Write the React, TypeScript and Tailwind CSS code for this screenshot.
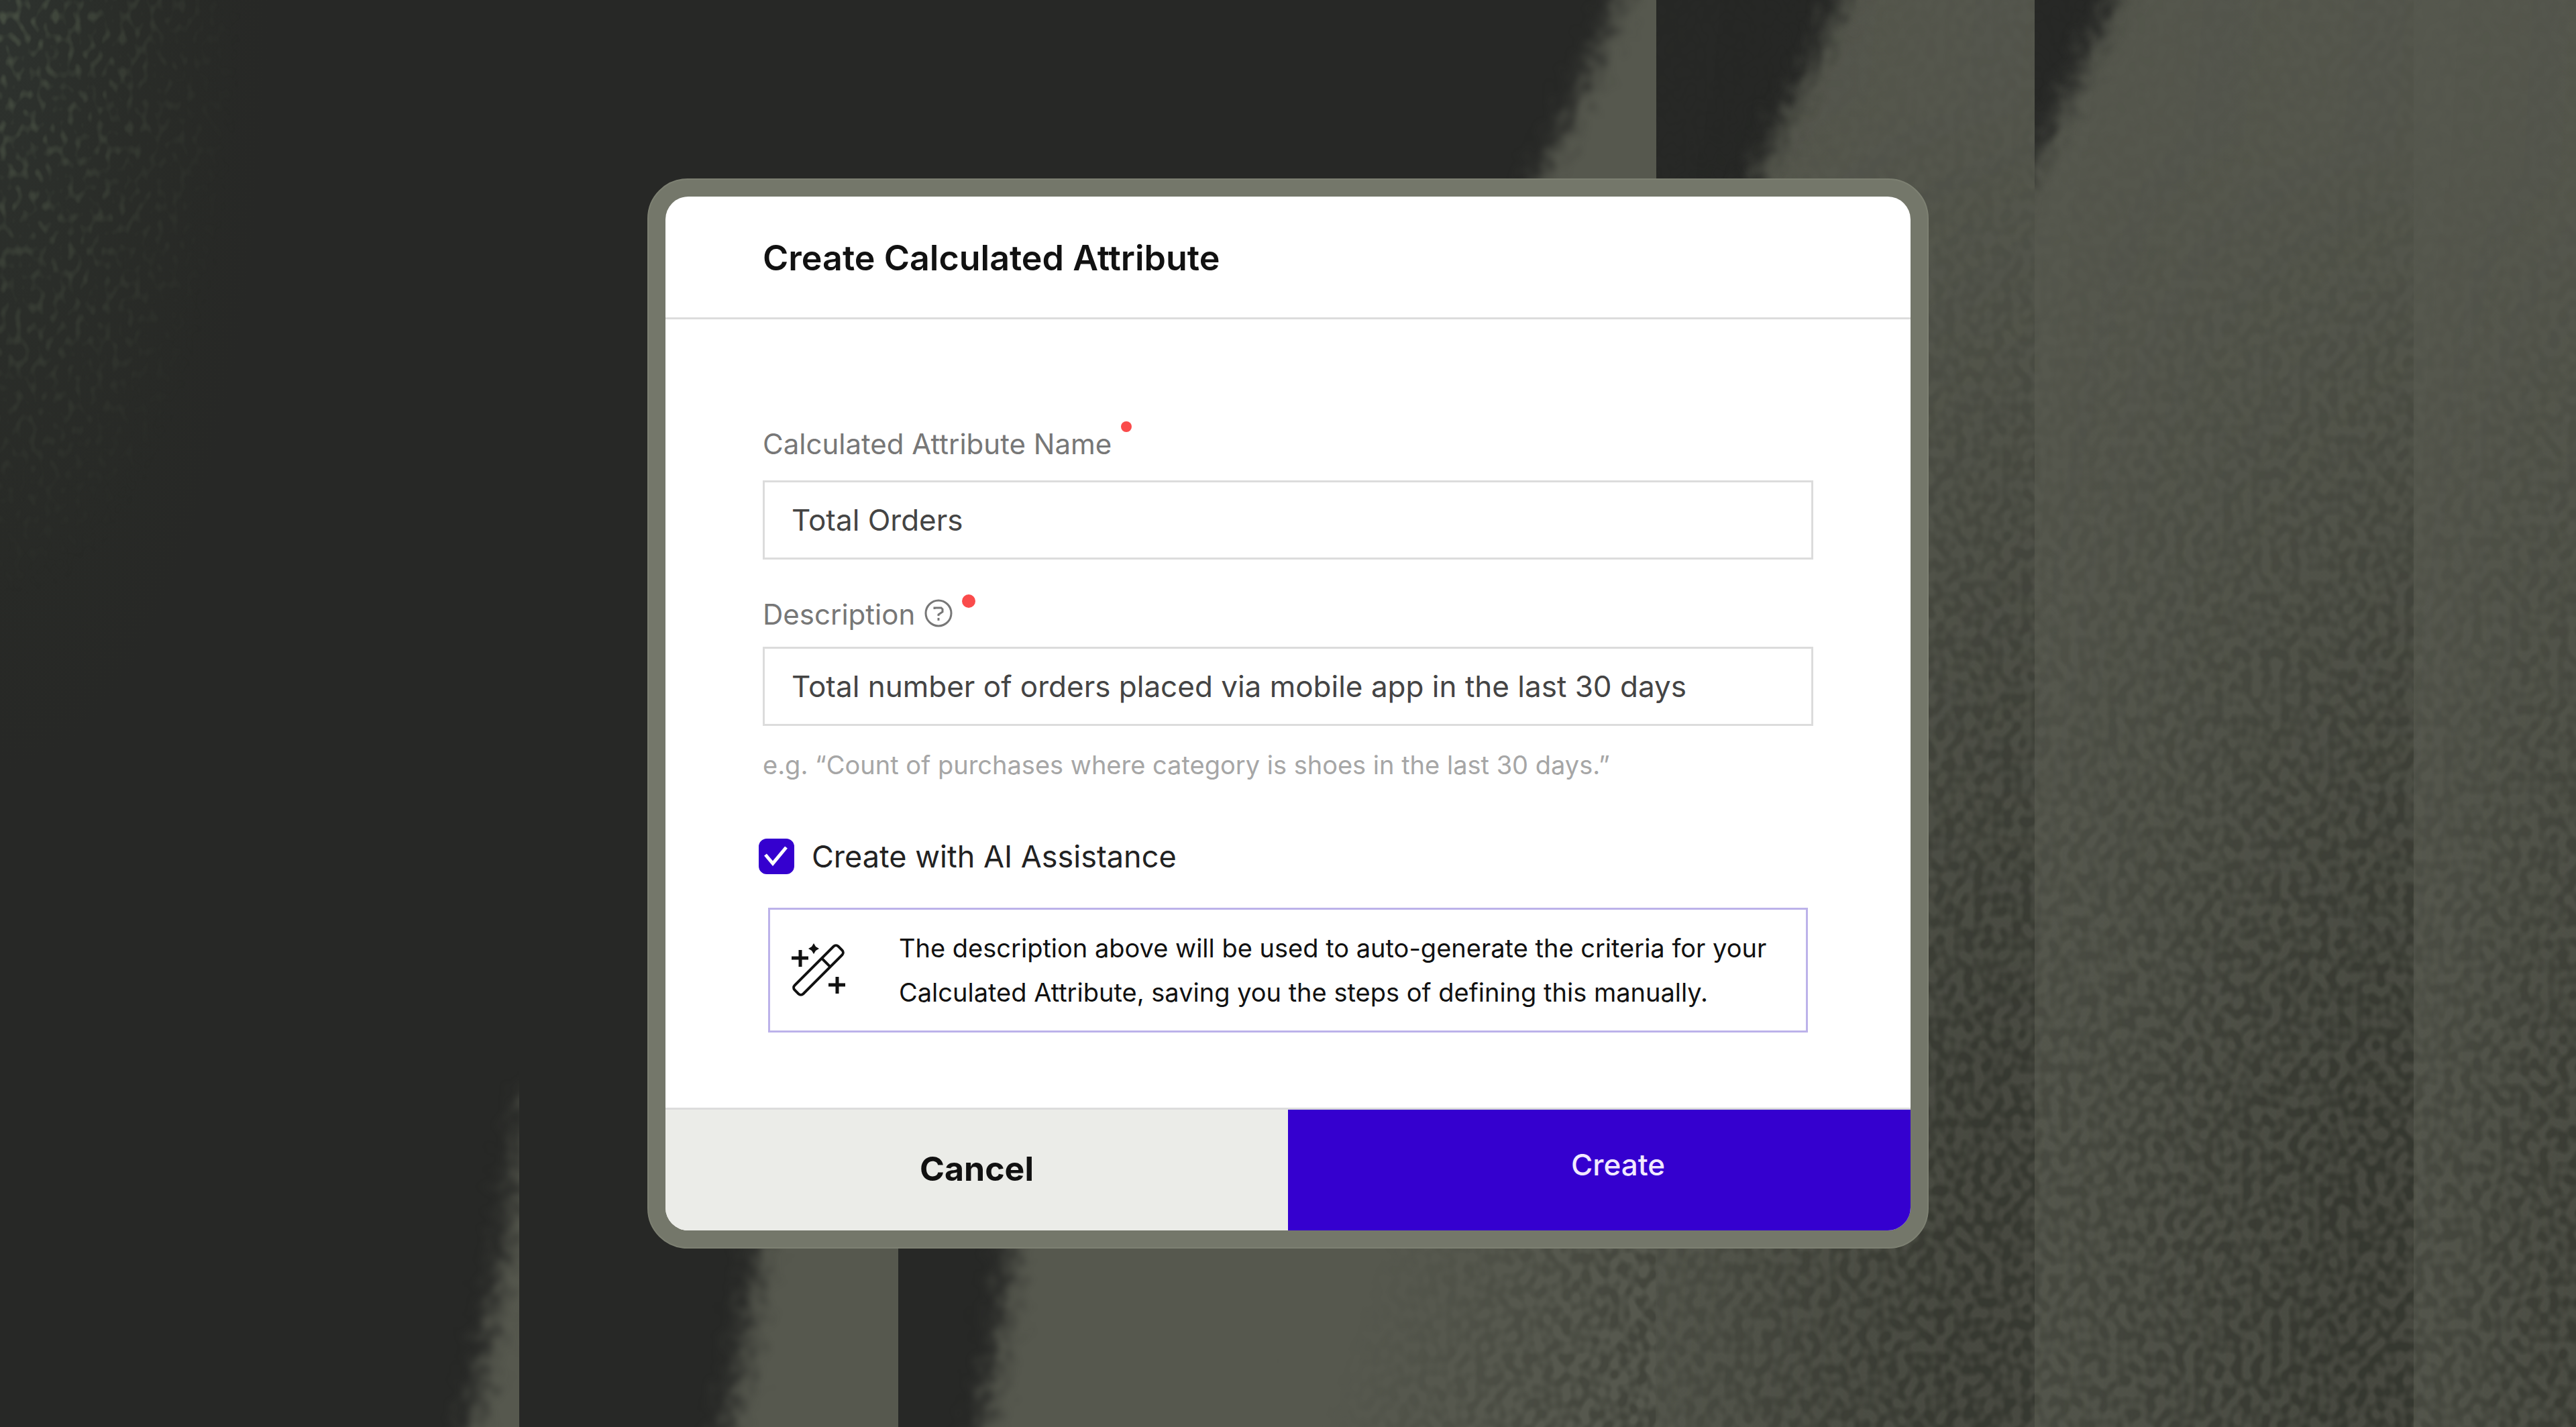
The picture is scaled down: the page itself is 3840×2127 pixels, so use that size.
import { useState } from "react";

const PANEL = 565;

// Light wedges, each cut off by the right edge of its glass panel
const wedges = [
  { x: 209, points: "790,1620 766,1800 736,1960 694,2180 830,2180 830,1620" },
  { x: 774, points: "1150,1700 1128,1900 1108,2020 1076,2180 1400,2180 1400,1700" },
  { x: 1339, points: "1530,1700 1506,1880 1490,2000 1456,2180 1960,2180 1960,1700" },
  { x: 1904, points: "2436,-60 2390,60 2334,190 2278,300 2180,620 1850,1100 1850,2180 2520,2180 2520,-60" },
  { x: 2468, points: "2770,-60 2720,60 2660,180 2600,300 2520,620 2400,1100 2400,2180 3090,2180 3090,-60" },
  { x: 3033, points: "3180,-60 3124,60 3080,150 3034,240 2960,400 2960,2180 3660,2180 3660,-60" },
  { x: 3598, points: "3500,-60 3900,-60 3900,2180 3500,2180" },
];

function Backdrop() {
  return (
    <svg
      aria-hidden="true"
      viewBox="0 0 3840 2127"
      preserveAspectRatio="none"
      className="absolute inset-0 h-full w-full"
    >
      <defs>
        <filter id="rough" filterUnits="userSpaceOnUse" x="0" y="-60" width="3900" height="2260" colorInterpolationFilters="sRGB">
          <feGaussianBlur in="SourceGraphic" stdDeviation="18 8" result="soft" />
          <feTurbulence type="fractalNoise" baseFrequency="0.06 0.05" numOctaves="2" seed="4" result="noise" />
          <feDisplacementMap in="soft" in2="noise" scale="64" xChannelSelector="R" yChannelSelector="G" />
          <feGaussianBlur stdDeviation="5" />
        </filter>
        <filter id="grain" filterUnits="userSpaceOnUse" x="0" y="0" width="3840" height="2127" colorInterpolationFilters="sRGB">
          <feTurbulence type="fractalNoise" baseFrequency="0.07 0.06" numOctaves="1" seed="9" />
          <feColorMatrix values="0 0 0 0 0.18  0 0 0 0 0.19  0 0 0 0 0.16  4 0 0 0 -1.55" />
        </filter>
        <filter id="speckle" filterUnits="userSpaceOnUse" x="0" y="0" width="1000" height="1300" colorInterpolationFilters="sRGB">
          <feTurbulence type="fractalNoise" baseFrequency="0.09 0.06" numOctaves="1" seed="2" />
          <feColorMatrix values="0 0 0 0 0.34  0 0 0 0 0.38  0 0 0 0 0.31  4 0 0 0 -2" />
        </filter>
        <linearGradient id="fade" x1="0" y1="0" x2="1" y2="0.3">
          <stop offset="0" stopColor="#fff" stopOpacity="0.1" />
          <stop offset="0.4" stopColor="#fff" stopOpacity="0.28" />
          <stop offset="1" stopColor="#fff" stopOpacity="0.66" />
        </linearGradient>
        <linearGradient id="shade" x1="0" y1="0" x2="1" y2="0.3">
          <stop offset="0.1" stopColor="#22231e" stopOpacity="0" />
          <stop offset="1" stopColor="#22231e" stopOpacity="0.28" />
        </linearGradient>
        <linearGradient id="down" gradientUnits="userSpaceOnUse" x1="2468" y1="100" x2="2300" y2="1500">
          <stop offset="0" stopColor="#000" stopOpacity="0.9" />
          <stop offset="0.4" stopColor="#000" stopOpacity="0.55" />
          <stop offset="1" stopColor="#000" stopOpacity="0" />
        </linearGradient>
        <linearGradient id="across" gradientUnits="userSpaceOnUse" x1="2060" y1="1860" x2="2468" y2="2000">
          <stop offset="0" stopColor="#fff" stopOpacity="0" />
          <stop offset="1" stopColor="#fff" stopOpacity="0.5" />
        </linearGradient>
        <radialGradient id="corner" gradientUnits="userSpaceOnUse" cx="0" cy="0" r="1" gradientTransform="scale(360 900)">
          <stop offset="0" stopColor="#fff" stopOpacity="0.6" />
          <stop offset="1" stopColor="#fff" stopOpacity="0" />
        </radialGradient>
        <radialGradient id="moss" gradientUnits="userSpaceOnUse" cx="0" cy="0" r="1" gradientTransform="scale(400 1150)">
          <stop offset="0" stopColor="#2f3430" stopOpacity="0.9" />
          <stop offset="1" stopColor="#2a2e26" stopOpacity="0" />
        </radialGradient>
        <mask id="grainMask" maskUnits="userSpaceOnUse" x="0" y="0" width="3840" height="2127">
          <rect x="2468" width="565" height="2127" fill="url(#fade)" />
          <rect x="3033" width="565" height="2127" fill="url(#fade)" />
          <rect x="3598" width="400" height="2127" fill="url(#fade)" />
          <rect x="3033" width="807" height="2127" fill="#fff" opacity="0.12" />
          <rect x="2468" width="1372" height="2127" fill="url(#down)" />
          <rect x="1904" y="1500" width="564" height="627" fill="url(#across)" />
        </mask>
        <mask id="shadeMask" maskUnits="userSpaceOnUse" x="0" y="0" width="3840" height="2127">
          <rect width="3840" height="2127" fill="#fff" />
          <rect width="3840" height="2127" fill="url(#down)" />
        </mask>
        <mask id="cornerMask" maskUnits="userSpaceOnUse" x="0" y="0" width="1000" height="1300">
          <rect width="1000" height="1300" fill="url(#corner)" />
        </mask>
        {wedges.map(({ x }) => (
          <clipPath key={x} id={`panel-${x}`}>
            <rect x={x} y="0" width={PANEL} height="2127" />
          </clipPath>
        ))}
      </defs>

      <rect width="3840" height="2127" fill="#272826" />
      <rect width="1000" height="1300" fill="url(#moss)" />
      <g mask="url(#cornerMask)">
        <rect width="1000" height="1300" filter="url(#speckle)" />
      </g>
      {wedges.map(({ x, points }) => (
        <g key={x} clipPath={`url(#panel-${x})`}>
          <polygon points={points} fill="#56584e" filter="url(#rough)" />
        </g>
      ))}
      <g mask="url(#shadeMask)">
        <rect x="2468" width="565" height="2127" fill="url(#shade)" />
        <rect x="3033" width="565" height="2127" fill="url(#shade)" />
        <rect x="3598" width="400" height="2127" fill="url(#shade)" />
      </g>
      <g mask="url(#grainMask)">
        <rect width="3840" height="2127" filter="url(#grain)" />
      </g>
    </svg>
  );
}

function WandIcon() {
  return (
    <svg viewBox="0 0 80 80" fill="none" stroke="#111" strokeWidth="4" className="size-20 shrink-0" aria-hidden="true">
      <g transform="rotate(-45 40 40)">
        <rect x="-6" y="31" width="92" height="18" rx="5" />
        <path d="M56 31v18" />
      </g>
      <path d="M13 10v25M0 22h25M68 50v25M55 62h25" strokeWidth="5" />
      <path d="M33 0l3 5 5 3-5 3-3 5-3-5-5-3 5-3z" fill="#111" stroke="none" />
    </svg>
  );
}

function HelpIcon() {
  return (
    <svg viewBox="0 0 42 42" fill="none" stroke="#777" strokeWidth="3" className="size-[42px]" aria-hidden="true">
      <circle cx="21" cy="21" r="19" />
      <path d="M15 15v-2h10l2 2v4l-6 4v2" />
      <path d="M21 28v4" />
    </svg>
  );
}

const inputClass =
  "block h-[118px] w-full border-[3px] border-[#dcdcdc] bg-white px-10 text-[44px] text-[#444] outline-none";

export default function App() {
  const [name, setName] = useState("Total Orders");
  const [description, setDescription] = useState(
    "Total number of orders placed via mobile app in the last 30 days"
  );
  const [ai, setAi] = useState(true);

  return (
    <main className="relative flex min-h-screen items-center justify-center overflow-hidden bg-[#272826] font-['Inter',sans-serif]">
      <Backdrop />

      <div className="relative w-full max-w-[1910px] rounded-[60px] border-2 border-[#7d8072] bg-[#74776a] p-[25px]">
        <form
          className="overflow-hidden rounded-[34px] bg-white"
          onSubmit={(e) => e.preventDefault()}
        >
          <header className="flex h-[183px] items-center border-b-[3px] border-[#dcdcdc] px-[145px] pt-1">
            <h1 className="text-[52px] font-semibold leading-[60px] text-[#111]">
              Create Calculated Attribute
            </h1>
          </header>

          <div className="px-[139px] pb-28 pt-[152px]">
            <div className="px-1.5">
              <div className="flex items-start gap-3.5">
                <label htmlFor="name" className="text-[42px] leading-[68px] text-[#777]">
                  Calculated Attribute Name
                </label>
                <span className="size-4 rounded-full bg-[#fa4b4b]" />
              </div>
              <input
                id="name"
                required
                value={name}
                onChange={(e) => setName(e.target.value)}
                className={`${inputClass} mt-5`}
              />

              <div className="mt-12 flex items-start gap-3.5">
                <label htmlFor="description" className="text-[42px] leading-[68px] text-[#777]">
                  Description
                </label>
                <button type="button" aria-label="About the description" className="flex h-16 items-center">
                  <HelpIcon />
                </button>
                <span className="mt-1 size-5 rounded-full bg-[#fa4b4b]" />
              </div>
              <input
                id="description"
                required
                aria-describedby="hint"
                value={description}
                onChange={(e) => setDescription(e.target.value)}
                className={`${inputClass} mt-3.5`}
              />
              <p id="hint" className="mt-8 text-[38px] leading-[52px] text-[#a6a6a6]">
                e.g. “Count of purchases where category is shoes in the last 30 days.”
              </p>
            </div>

            <label className="mt-[84px] flex items-center gap-[26px] text-[45px] leading-[52px] text-[#222]">
              <span className="grid shrink-0">
                <input
                  type="checkbox"
                  checked={ai}
                  onChange={(e) => setAi(e.target.checked)}
                  className="peer col-start-1 row-start-1 size-[53px] appearance-none rounded-xl border-[3px] border-[#3500cf] checked:bg-[#3500cf]"
                />
                <svg
                  viewBox="0 0 53 53"
                  fill="none"
                  stroke="#fff"
                  strokeWidth="5"
                  className="pointer-events-none invisible col-start-1 row-start-1 size-[53px] peer-checked:visible"
                  aria-hidden="true"
                >
                  <path d="M10 24l11 13L41 13" />
                </svg>
              </span>
              Create with AI Assistance
            </label>

            <div className="mx-3.5 mt-[50px] flex items-center gap-20 border-[3px] border-[#bcb2ea] px-8 py-6">
              <WandIcon />
              <p className="text-[38px] leading-[66px] text-[#111]">
                The description above will be used to auto-generate the criteria for your Calculated
                Attribute, saving you the steps of defining this manually.
              </p>
            </div>
          </div>

          <footer className="grid h-[183px] grid-cols-2 border-t-[3px] border-[#dcdcdc]">
            <button type="button" className="bg-[#ebece8] pb-1 text-[50px] font-bold text-[#111]">
              Cancel
            </button>
            <button type="submit" className="bg-[#3500cf] pb-4 pl-14 text-[44px] font-medium text-[#f1e9ff]">
              Create
            </button>
          </footer>
        </form>
      </div>
    </main>
  );
}
